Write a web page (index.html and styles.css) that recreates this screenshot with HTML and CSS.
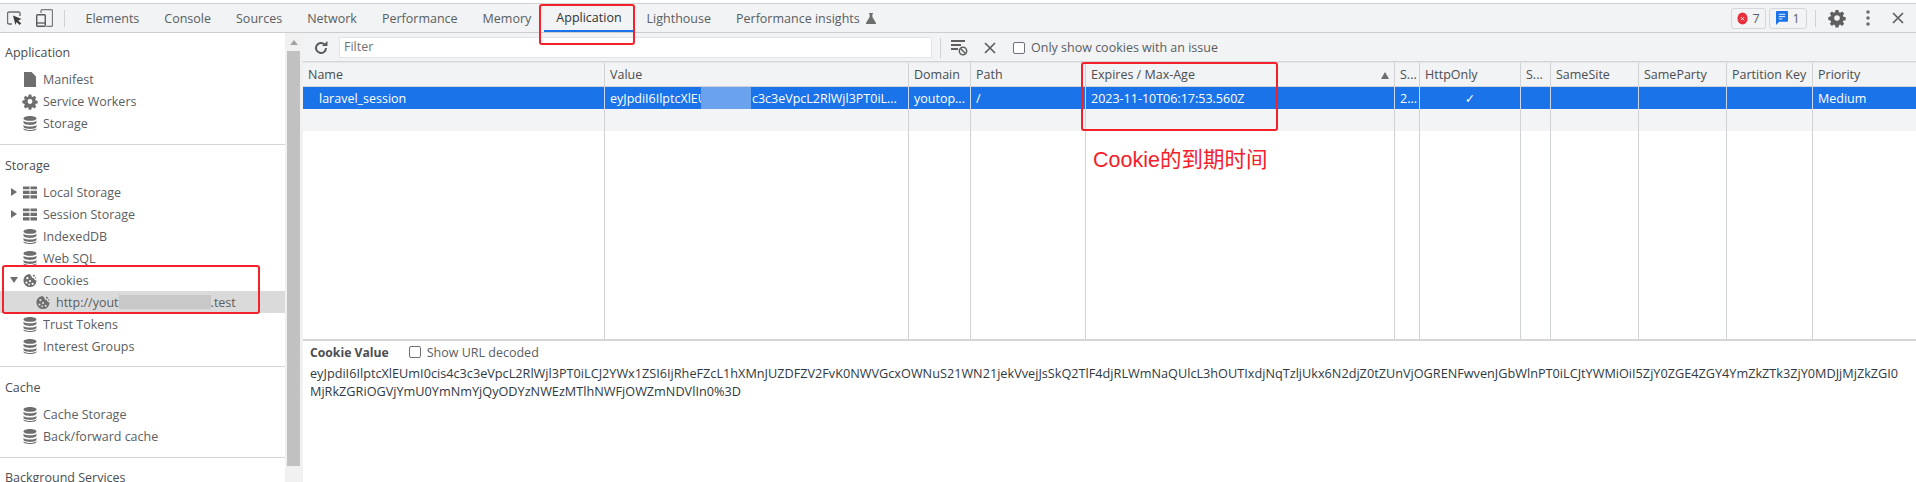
FILE: index.html
```html
<!DOCTYPE html>
<html lang="en">
<head>
<meta charset="utf-8">
<title>DevTools Application Cookies</title>
<link rel="stylesheet" href="styles.css">
</head>
<body>
<svg class="defs" width="0" height="0" aria-hidden="true">
  <symbol id="db" viewBox="0 0 14 15">
    <path d="M7 0C3.300 0 .5 1 .5 2.400S3.300 4.800 7 4.800s6.500-1 6.500-2.400S10.700 0 7 0zM.5 4.300v2.200C.5 7.900 3.300 8.900 7 8.900s6.500-1 6.500-2.400V4.300C13.500 5.700 10.700 6.300 7 6.300S.5 5.700.5 4.300zM.5 8.400v2.200C.5 12 3.300 13 7 13s6.500-1 6.500-2.400V8.400c0 1.400-2.800 2-6.500 2S.5 9.800.5 8.400zM.5 11.700v1C.5 14 3.300 15 7 15s6.500-1 6.500-2.300v-1c0 1.300-2.800 2.200-6.500 2.200S.5 13 .5 11.700z" fill="#6e6e6e"/>
  </symbol>
  <symbol id="grid" viewBox="0 0 15 13">
    <path d="M0 0h7v3H0zM8 0h7v3H8zM0 4.500h7v3.500H0zM8 4.500h7v3.500H8zM0 9.500h7V13H0zM8 9.500h7V13H8z" fill="#6e6e6e"/>
  </symbol>
  <symbol id="cookie" viewBox="0 0 16 16">
    <path fill-rule="evenodd" d="M8 .5a7.500 7.500 0 1 0 7.500 7.500 3 3 0 0 1-3-2.500A3.200 3.200 0 0 1 9.500 2.500 2.500 2.500 0 0 1 8 .5zM5 4a1.300 1.300 0 1 1 0 2.600A1.300 1.300 0 0 1 5 4zm-1 5a1.300 1.300 0 1 1 0 2.600A1.300 1.300 0 0 1 4 9zm4-1.500a1.200 1.200 0 1 1 0 2.400 1.200 1.200 0 0 1 0-2.400zm3 3a1.300 1.300 0 1 1 0 2.600 1.300 1.300 0 0 1 0-2.600zM7 11.500a1 1 0 1 1 0 2 1 1 0 0 1 0-2z" fill="#6e6e6e"/>
    <circle cx="12.500" cy="2.500" r="1.100" fill="#6e6e6e"/><circle cx="14.500" cy="5" r=".8" fill="#6e6e6e"/>
  </symbol>
</svg>

<header class="tabbar">
  <div class="tools">
    <svg class="ic-inspect" viewBox="0 0 15 14"><path d="M5 13H2a1.500 1.500 0 0 1-1.500-1.500v-9A1.500 1.500 0 0 1 2 1h9.500A1.500 1.500 0 0 1 13 2.500V5" fill="none" stroke="#6e6e6e" stroke-width="1.400"/><path d="M6 4.500l8.500 3.500-3.300 1.400 3 3-1.600 1.600-3-3L8.500 14z" fill="#3c3c3c"/></svg>
    <svg class="ic-device" viewBox="0 0 17 18"><path d="M5 4V2a1.300 1.300 0 0 1 1.300-1.300h8.900A1.300 1.300 0 0 1 16.500 2v14a1.300 1.300 0 0 1-1.300 1.300h-5" fill="none" stroke="#7a7a7a" stroke-width="1.300"/><rect x=".7" y="5.700" width="8.600" height="11.600" rx="1" fill="none" stroke="#5a5a5a" stroke-width="1.400"/><path d="M1 14h8" stroke="#5a5a5a" stroke-width="1.300"/></svg>
    <span class="vsep vsep-tools"></span>
  </div>
  <nav class="tabs">
    <span class="tab">Elements</span>
    <span class="tab">Console</span>
    <span class="tab">Sources</span>
    <span class="tab">Network</span>
    <span class="tab">Performance</span>
    <span class="tab">Memory</span>
    <span class="tab tab-active">Application</span>
    <span class="tab">Lighthouse</span>
    <span class="tab">Performance insights <svg class="ic-flask" viewBox="0 0 10 11"><path d="M3 0h4v1H6.400v3L10 10a.7.7 0 0 1-.6 1H.6A.7.7 0 0 1 0 10l3.600-6V1H3z" fill="#6e6e6e"/></svg></span>
  </nav>
  <div class="actions">
    <span class="badge"><svg class="ic-err" viewBox="0 0 12 14"><ellipse cx="6" cy="7" rx="5.500" ry="6.500" fill="#e8303a"/><path d="M4.300 5.500l3.400 3.400M7.700 5.500L4.300 8.900" stroke="#fff" stroke-width="1"/></svg>7</span>
    <span class="badge badge-msg"><svg class="ic-msg" viewBox="0 0 13 15"><path d="M1 0h11a1 1 0 0 1 1 1v9.500a1 1 0 0 1-1 1H3.500L0 15V1a1 1 0 0 1 1-1z" fill="#1a73e8"/><path d="M3 3.500h7M3 6h7M3 8.500h4" stroke="#fff" stroke-width="1"/></svg>1</span>
    <span class="vsep vsep-actions"></span>
    <svg class="ic-gear" viewBox="0 0 16 16"><path fill-rule="evenodd" d="M6.500 0h3l.4 2.200 1.300.6L13.100 1.500l2.100 2.100-1.300 1.900.6 1.300 2.200.4v3l-2.200.4-.6 1.300 1.300 1.900-2.100 2.100-1.900-1.300-1.300.6-.4 2.200h-3l-.4-2.200-1.300-.6-1.900 1.300-2.100-2.100 1.300-1.900-.6-1.300L-.7 9.900v-3l2.200-.4.600-1.300L.8 3.600l2.100-2.100 1.900 1.300 1.300-.6zM8 5.200a2.800 2.800 0 1 0 0 5.600 2.800 2.800 0 0 0 0-5.600z" fill="#5f5f5f"/></svg>
    <svg class="ic-dots" viewBox="0 0 4 16"><circle cx="2" cy="2" r="1.800" fill="#6e6e6e"/><circle cx="2" cy="8" r="1.800" fill="#6e6e6e"/><circle cx="2" cy="14" r="1.800" fill="#6e6e6e"/></svg>
    <svg class="ic-x" viewBox="0 0 12 12"><path d="M1 1l10 10M11 1L1 11" stroke="#5f5f5f" stroke-width="1.700"/></svg>
  </div>
</header>

<div class="body">
  <aside class="side">
    <div class="side-scroll">
      <section class="group">
        <h2 class="group-title">Application</h2>
        <div class="row"><svg class="ic ic-file" viewBox="0 0 12 15"><path d="M0 0h7.500L12 4.500V15H0z" fill="#6e6e6e"/></svg>Manifest</div>
        <div class="row"><svg class="ic ic-gear-s" viewBox="0 0 16 16"><path fill-rule="evenodd" d="M6.500 0h3l.4 2.200 1.300.6 1.900-1.300 2.100 2.100-1.300 1.900.6 1.300 2.200.4v3l-2.200.4-.6 1.300 1.300 1.900-2.100 2.100-1.900-1.300-1.300.6-.4 2.200h-3l-.4-2.200-1.300-.6-1.900 1.300-2.100-2.100 1.300-1.900-.6-1.300L-.7 9.900v-3l2.200-.4.600-1.300L.8 3.600l2.100-2.100 1.900 1.300 1.300-.6zM8 5.200a2.800 2.800 0 1 0 0 5.600 2.800 2.800 0 0 0 0-5.600z" fill="#6e6e6e"/></svg>Service Workers</div>
        <div class="row"><svg class="ic"><use href="#db"/></svg>Storage</div>
      </section>
      <section class="group">
        <h2 class="group-title">Storage</h2>
        <div class="row"><span class="arrow arrow-r"></span><svg class="ic"><use href="#grid"/></svg>Local Storage</div>
        <div class="row"><span class="arrow arrow-r"></span><svg class="ic"><use href="#grid"/></svg>Session Storage</div>
        <div class="row"><svg class="ic"><use href="#db"/></svg>IndexedDB</div>
        <div class="row"><svg class="ic"><use href="#db"/></svg>Web SQL</div>
        <div class="row"><span class="arrow arrow-d"></span><svg class="ic"><use href="#cookie"/></svg>Cookies</div>
        <div class="row row-sub"><svg class="ic"><use href="#cookie"/></svg>http://yout<span class="smudge"></span>.test</div>
        <div class="row"><svg class="ic"><use href="#db"/></svg>Trust Tokens</div>
        <div class="row"><svg class="ic"><use href="#db"/></svg>Interest Groups</div>
      </section>
      <section class="group">
        <h2 class="group-title">Cache</h2>
        <div class="row"><svg class="ic"><use href="#db"/></svg>Cache Storage</div>
        <div class="row"><svg class="ic"><use href="#db"/></svg>Back/forward cache</div>
      </section>
      <section class="group">
        <h2 class="group-title">Background Services</h2>
      </section>
    </div>
    <div class="scrollbar"><span class="sb-up"></span><span class="sb-thumb"></span></div>
  </aside>

  <main class="main">
    <div class="filterbar">
      <svg class="ic-refresh" viewBox="0 0 14 14"><path d="M12 7a5 5 0 1 1-1.500-3.600" fill="none" stroke="#5a5a5a" stroke-width="2"/><path d="M8 5h5.500V0z" fill="#5a5a5a"/></svg>
      <div class="filter">Filter</div>
      <span class="vsep vsep-filter"></span>
      <svg class="ic-clear" viewBox="0 0 17 16"><path d="M0 1h14M0 5h10M0 9h7" stroke="#5f5f5f" stroke-width="1.800"/><circle cx="12" cy="11" r="3.700" fill="none" stroke="#5f5f5f" stroke-width="1.500"/><path d="M9.500 8.500l5 5" stroke="#5f5f5f" stroke-width="1.500"/></svg>
      <svg class="ic-close" viewBox="0 0 12 12"><path d="M1 1l10 10M11 1L1 11" stroke="#5f5f5f" stroke-width="1.700"/></svg>
      <span class="check"></span>
      <span class="check-label">Only show cookies with an issue</span>
    </div>

    <div class="grid">
      <div class="cell head">Name</div><div class="cell head">Value</div><div class="cell head">Domain</div><div class="cell head">Path</div><div class="cell head sorted">Expires / Max-Age<span class="sort"></span></div><div class="cell head">S...</div><div class="cell head">HttpOnly</div><div class="cell head">S...</div><div class="cell head">SameSite</div><div class="cell head">SameParty</div><div class="cell head">Partition Key</div><div class="cell head">Priority</div>

      <div class="cell sel name">laravel_session</div><div class="cell sel value">eyJpdiI6IlptcXlEU<span class="blur"></span><span class="value-tail">c3c3eVpcL2RlWjl3PT0iL...</span></div><div class="cell sel">youtop...</div><div class="cell sel">/</div><div class="cell sel">2023-11-10T06:17:53.560Z</div><div class="cell sel">2...</div><div class="cell sel center">✓</div><div class="cell sel"></div><div class="cell sel"></div><div class="cell sel"></div><div class="cell sel"></div><div class="cell sel">Medium</div>

      <div class="cell alt"></div><div class="cell alt"></div><div class="cell alt"></div><div class="cell alt"></div><div class="cell alt"></div><div class="cell alt"></div><div class="cell alt"></div><div class="cell alt"></div><div class="cell alt"></div><div class="cell alt"></div><div class="cell alt"></div><div class="cell alt"></div>

      <div class="cell fill"></div><div class="cell fill"></div><div class="cell fill"></div><div class="cell fill"></div><div class="cell fill"></div><div class="cell fill"></div><div class="cell fill"></div><div class="cell fill"></div><div class="cell fill"></div><div class="cell fill"></div><div class="cell fill"></div><div class="cell fill"></div>
    </div>

    <section class="preview">
      <div class="preview-head"><strong class="preview-title">Cookie Value</strong><span class="check"></span><span class="check-label">Show URL decoded</span></div>
      <p class="preview-value">eyJpdiI6IlptcXlEUmI0cis4c3c3eVpcL2RlWjl3PT0iLCJ2YWx1ZSI6IjRheFZcL1hXMnJUZDFZV2FvK0NWVGcxOWNuS21WN21jekVvejJsSkQ2TlF4djRLWmNaQUlcL3hOUTIxdjNqTzljUkx6N2djZ0tZUnVjOGRENFwvenJGbWlnPT0iLCJtYWMiOiI5ZjY0ZGE4ZGY4YmZkZTk3ZjY0MDJjMjZkZGI0<br>MjRkZGRiOGVjYmU0YmNmYjQyODYzNWEzMTlhNWFjOWZmNDVlIn0%3D</p>
    </section>
  </main>
</div>

<div class="mark mark-tab"></div>
<div class="mark mark-exp"></div>
<div class="mark mark-cookies"></div>
<div class="note">Cookie的到期时间</div>
</body>
</html>
```

FILE: styles.css
```css
* { box-sizing: border-box; }
html, body { margin: 0; height: 482px; overflow: hidden; }
body { position: relative; background: #fff; font-family: "Open Sans", "Noto Sans", sans-serif; font-size: 12.500px; color: #3f4247; }
.defs { position: absolute; }

.tabbar { margin-top: 3px; height: 30px; display: flex; align-items: center; background: #f1f3f4; border-top: 1px solid #cfd1d4; border-bottom: 1px solid #cbcdd0; }
.tools { width: 85px; flex: none; display: flex; align-items: center; padding-left: 7px; }
.ic-inspect { width: 15px; height: 14px; }
.ic-device { width: 17px; height: 18px; margin-left: 14px; }
.vsep { display: block; width: 1px; height: 17px; background: #cfd1d4; flex: none; }
.vsep-tools { margin-left: 11px; }
.tabs { display: flex; flex: 1; height: 100%; margin-left: -12px; }
.tab { height: 100%; padding: 0 12.500px; display: flex; align-items: center; gap: 6px; white-space: nowrap; color: #5a5d61; }
.tab-active { color: #333; border-bottom: 2px solid #1a73e8; padding-top: 1px; }
.ic-flask { width: 10px; height: 11px; }
.actions { display: flex; align-items: center; flex: none; padding-right: 12px; }
.badge { width: 35px; height: 21px; border: 1px solid #d4d6d9; border-radius: 3px; display: flex; align-items: center; justify-content: center; gap: 4px; color: #5a5d61; }
.badge-msg { width: 38px; margin-left: 3px; }
.ic-err { width: 11px; height: 13px; }
.ic-msg { width: 12px; height: 14px; }
.vsep-actions { margin: 0 13px 0 8px; }
.ic-gear { width: 16px; height: 16px; overflow: visible; }
.ic-dots { width: 4px; height: 16px; margin-left: 21px; }
.ic-x { width: 12px; height: 12px; margin-left: 22px; }

.body { display: flex; height: 449px; }
.side { width: 303px; flex: none; display: flex; border-right: 1px solid #cbcdd0; }
.side-scroll { width: 285px; flex: none; overflow: hidden; padding-top: 1px; }
.group { border-bottom: 1px solid #d3d5d8; padding: 0 0 9px; }
.group:nth-child(1) { height: 111px; }
.group:nth-child(2) { height: 222px; }
.group:nth-child(3) { height: 91px; }
.group-title { margin: 0; padding: 9px 0 0 5px; font-size: 12.500px; font-weight: 400; line-height: 22px; color: #4a4d51; }
.group:first-child .group-title { height: 34px; padding-top: 8px; }
.group:nth-child(n+2) .group-title { height: 36px; padding-top: 10px; }
.group:nth-child(4) .group-title { height: 30px; padding-top: 9px; }
.row { height: 22px; display: flex; align-items: center; padding-left: 23px; color: #5a5d61; white-space: nowrap; }
.ic { width: 14px; height: 15px; margin-right: 6px; flex: none; }
.ic-file { width: 12px; margin: 0 7px 0 1px; }
.ic-gear-s { overflow: visible; }
.arrow { width: 0; height: 0; margin-left: -12px; margin-right: 6px; border-style: solid; flex: none; }
.arrow-r { border-width: 4px 0 4px 6px; border-color: transparent transparent transparent #6e6e6e; }
.arrow-d { border-width: 6px 4px 0 4px; border-color: #6e6e6e transparent transparent transparent; margin-left: -13px; margin-right: 5px; }
.row-sub { background: #dadada; padding-left: 36px; }
.smudge { background: #c8c8c8; width: 92px; flex: none; height: 14px; }

.scrollbar { width: 18px; flex: none; background: #f1f1f1; padding: 0 3px 0 2px; }
.sb-up { display: block; width: 0; height: 0; margin: 7px auto 6px; border-style: solid; border-width: 0 4px 5px 4px; border-color: transparent transparent #a3a3a3 transparent; }
.sb-thumb { display: block; height: 415px; background: #c1c1c1; }

.main { flex: 1; min-width: 0; display: flex; flex-direction: column; }
.filterbar { height: 29px; flex: none; display: flex; align-items: center; padding-top: 1px; background: #f1f3f4; border-bottom: 1px solid #d3d5d8; }
.ic-refresh { width: 14px; height: 14px; margin-left: 11px; }
.filter { width: 593px; height: 21px; margin-left: 11px; background: #fff; border: 1px solid #e3e4e6; padding-left: 4px; line-height: 18px; color: #6f7276; }
.vsep-filter { height: 20px; margin-left: 8px; }
.ic-clear { width: 17px; height: 16px; margin-left: 10px; }
.ic-close { width: 12px; height: 12px; margin-left: 16px; }
.check { width: 12px; height: 12px; border: 1px solid #6e7175; border-radius: 2px; background: #fff; flex: none; }
.filterbar .check { margin-left: 17px; }
.check-label { margin-left: 6px; color: #5a5d61; white-space: nowrap; }

.grid { height: 277px; flex: none; display: grid; grid-template-columns: 302px 304px 62px 115px 309px 25px 101px 30px 88px 88px 86px 1fr; grid-template-rows: 25px 22px 22px 1fr; background: #fff; }
.cell { border-right: 1px solid #d0d2d5; padding: 0 5px; white-space: nowrap; overflow: hidden; display: flex; align-items: center; color: #303942; }
.cell:nth-child(12n) { border-right: 0; }
.head { background: #f1f3f4; border-bottom: 1px solid #d0d2d5; border-top: 1px solid #e6e7e9; color: #4a4d51; }
.sorted { position: relative; }
.sort { position: absolute; right: 5px; top: 9px; border-style: solid; border-width: 0 4px 7px 4px; border-color: transparent transparent #6e6e6e transparent; }
.sel { background: #1a73e8; color: #fff; border-right-color: #c9d8ef; }
.sel.name { padding-left: 16px; }
.sel.center { justify-content: center; font-family: "DejaVu Sans", sans-serif; }
.blur { width: 50px; height: 22px; margin-left: -6px; flex: none; background: #6aa2ee; }
.value-tail { margin-left: 1px; }
.alt { background: #f3f4f5; }
.preview { flex: 1; border-top: 2px solid #d3d5d8; padding: 2px 6px 0 7px; }
.preview-head { display: flex; align-items: center; height: 18px; }
.preview-title { font-weight: 700; font-size: 12.200px; color: #4a4d51; margin-right: 20px; }
.preview-value { margin: 3px 0 0; font-size: 12.700px; line-height: 18px; color: #303942; white-space: nowrap; }

.mark { position: absolute; border: 2.500px solid #f2212a; border-radius: 3px; pointer-events: none; }
.mark-tab { left: 539px; top: 4px; width: 96px; height: 41px; }
.mark-exp { left: 1081px; top: 62px; width: 197px; height: 69px; }
.mark-cookies { left: 2px; top: 265px; width: 258px; height: 49px; }
.note { position: absolute; left: 1093px; top: 146px; font-family: "Liberation Sans", "Noto Sans CJK SC", sans-serif; font-size: 21.500px; line-height: 28px; color: #f2212a; white-space: nowrap; }
```
